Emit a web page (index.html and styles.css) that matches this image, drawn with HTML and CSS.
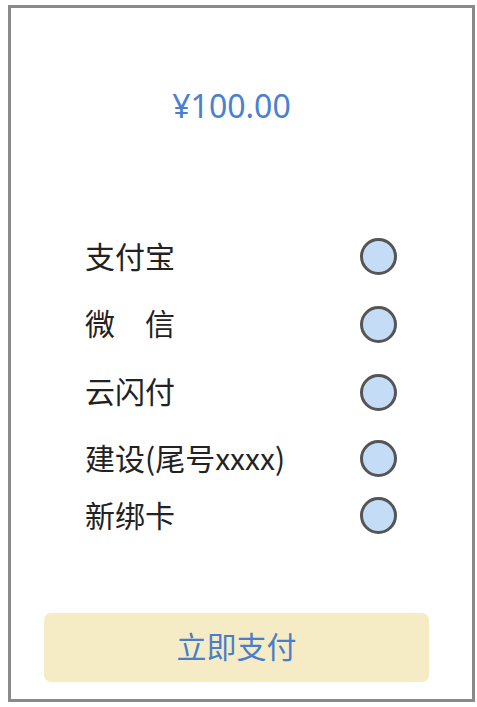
FILE: index.html
```html
<!DOCTYPE html>
<html lang="zh-CN">
<head>
<meta charset="utf-8">
<title>支付</title>
<link rel="stylesheet" href="styles.css">
</head>
<body>
  <div class="frame">
    <div class="price">¥100.00</div>
    <ul class="methods">
      <li class="method method-alipay"><span class="method-name">支付宝</span><span class="radio"></span></li>
      <li class="method method-wechat"><span class="method-name">微&emsp;信</span><span class="radio"></span></li>
      <li class="method method-unionpay"><span class="method-name">云闪付</span><span class="radio"></span></li>
      <li class="method method-card"><span class="method-name">建设(尾号xxxx)</span><span class="radio"></span></li>
      <li class="method method-new"><span class="method-name">新绑卡</span><span class="radio"></span></li>
    </ul>
    <button class="pay-btn" type="button">立即支付</button>
  </div>
</body>
</html>
```

FILE: styles.css
```css
html, body {
  margin: 0;
  padding: 0;
  background: #fff;
}

body {
  font-family: "Noto Sans CJK SC", "Noto Sans", sans-serif;
}

.frame {
  box-sizing: border-box;
  width: 467px;
  height: 697px;
  margin: 5px 0 0 8px;
  border: 3px solid #8a8a8a;
  display: flex;
  flex-direction: column;
}

.price {
  padding: 78px 20px 0 0;
  text-align: center;
  font-family: "Noto Sans", "Noto Sans CJK SC", sans-serif;
  font-size: 32px;
  line-height: 40px;
  color: #4a80d2;
}

.methods {
  list-style: none;
  margin: 97px 0 0;
  padding: 0 0 0 74px;
}

.method {
  display: flex;
  align-items: center;
  height: 67px;
}

.method-wechat,
.method-unionpay {
  height: 68px;
}

.method-card {
  height: 65px;
}

.method-new {
  height: 49px;
}

.method-name {
  width: 275px;
  margin-bottom: 4px;
  font-size: 30px;
  line-height: 40px;
  color: #222;
}

.radio {
  box-sizing: border-box;
  width: 37px;
  height: 37px;
  border-radius: 50%;
  border: 3px solid #555;
  background: #c4dcf6;
}

.pay-btn {
  margin: auto 43px 17px 33px;
  height: 69px;
  border: none;
  border-radius: 7px;
  background: #f5ecc6;
  color: #4a7ecb;
  font-family: "Noto Sans CJK SC", sans-serif;
  font-size: 30px;
  padding: 0 0 6px;
}
```
